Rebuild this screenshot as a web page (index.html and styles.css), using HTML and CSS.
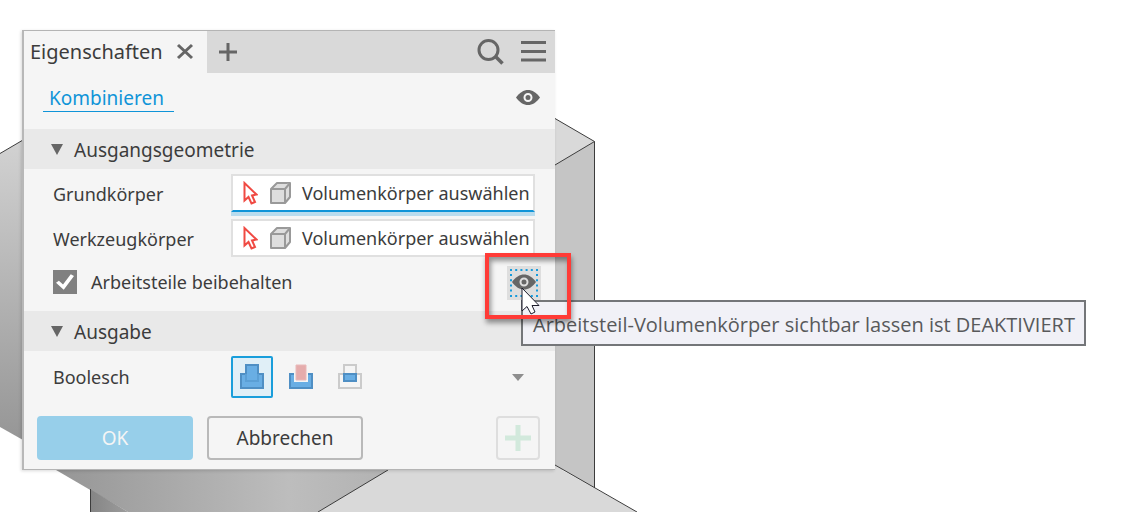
FILE: index.html
```html
<!DOCTYPE html>
<html lang="de">
<head>
<meta charset="utf-8">
<title>Eigenschaften</title>
<link rel="stylesheet" href="styles.css">
</head>
<body>
<svg class="model" width="700" height="512" viewBox="0 0 700 512" aria-hidden="true">
  <defs>
    <linearGradient id="side" x1="0" y1="0" x2="0" y2="1"><stop offset="0" stop-color="#d2d2d2"/><stop offset="1" stop-color="#969696"/></linearGradient>
    <linearGradient id="base" x1="0" y1="0" x2="1" y2="0"><stop offset="0" stop-color="#969696"/><stop offset="0.7" stop-color="#bdbdbd"/><stop offset="1" stop-color="#b2b2b2"/></linearGradient>
    <linearGradient id="foot" x1="0" y1="0" x2="1" y2="0"><stop offset="0" stop-color="#858585"/><stop offset="1" stop-color="#9c9c9c"/></linearGradient>
  </defs>
  <path d="M0 153.500L23 140V440L0 427z" fill="url(#side)"/>
  <path d="M0 153.500L23 140" class="edge"/>
  <path d="M56 470H389L318 512H128z" fill="url(#base)"/>
  <path d="M90 489L128 512H90z" fill="url(#foot)"/>
  <path d="M90.500 489V512" class="edge"/>
  <path d="M388 470H562L637 512H318z" fill="#d9d9d9"/>
  <path d="M318 512L388 470" class="edge"/>
  <path d="M555 118.500L594.500 141.500L555 165z" fill="#d9d9d9"/>
  <path d="M555 165L594.500 141.500V488L555 465z" fill="#c5c5c5"/>
  <path d="M555 465L564 470H555z" fill="#d9d9d9"/>
  <path d="M555 118.500L594.500 141.500L555 165M594.500 141.500V488M555 465L637 512" class="edge"/>
</svg>

<main class="panel">
  <header class="tabs">
    <div class="tab">
      <span>Eigenschaften</span>
      <button class="icon-button" aria-label="Schließen"><svg width="18" height="18" viewBox="0 0 18 18"><path d="M2 2L16 15M16 2L2 15" stroke="#666" stroke-width="3"/></svg></button>
    </div>
    <button class="icon-button add-tab" aria-label="Hinzufügen"><svg width="18" height="18" viewBox="0 0 18 18"><path d="M9 0V18M0 9H18" stroke="#666" stroke-width="3"/></svg></button>
    <button class="icon-button" aria-label="Suchen"><svg width="28" height="28" viewBox="0 0 28 28" fill="none" stroke="#666"><circle cx="11.500" cy="12" r="9.500" stroke-width="3"/><path d="M18.500 18.500L25.500 25.500" stroke-width="3.500"/></svg></button>
    <button class="icon-button menu" aria-label="Menü"><svg width="25" height="22" viewBox="0 0 25 22"><path d="M0 1.500H25M0 10.500H25M0 19H25" stroke="#666" stroke-width="3"/></svg></button>
  </header>

  <nav class="crumbs">
    <a class="crumb" href="#">Kombinieren</a>
    <button class="icon-button" aria-label="Sichtbarkeit"><svg width="24" height="15" viewBox="0 0 24 15"><path d="M0 7.500C7-2.500 17-2.500 24 7.500C17 17.500 7 17.500 0 7.500z" fill="#666"/><circle cx="12" cy="7.500" r="3.500" fill="#666" stroke="#f5f5f5" stroke-width="2"/></svg></button>
  </nav>

  <h2 class="section-title"><svg width="12" height="11" viewBox="0 0 12 11"><path d="M0 0H12L6 11z" fill="#666"/></svg>Ausgangsgeometrie</h2>
  <div class="fields">
    <span class="label" id="grund">Grundkörper</span>
    <button class="picker picker-active" aria-describedby="grund">
      <svg width="16" height="24" viewBox="0 0 16 24"><path d="M2.500 2V19.500L6.500 16L9.500 22.500L13 21L10 14.500L14.500 13.500z" fill="#fff" stroke="#f04a43" stroke-width="2"/></svg>
      <svg width="22" height="22" viewBox="0 0 22 22" fill="#dedede" stroke="#999" stroke-width="2" stroke-linejoin="round"><path d="M2 7L8 1H21V15L16 21H2z"/><path d="M2 7H16L21 1M16 7V21"/></svg>
      <span>Volumenkörper auswählen</span>
    </button>
    <span class="label" id="werkzeug">Werkzeugkörper</span>
    <button class="picker" aria-describedby="werkzeug">
      <svg width="16" height="24" viewBox="0 0 16 24"><path d="M2.500 2V19.500L6.500 16L9.500 22.500L13 21L10 14.500L14.500 13.500z" fill="#fff" stroke="#f04a43" stroke-width="2"/></svg>
      <svg width="22" height="22" viewBox="0 0 22 22" fill="#dedede" stroke="#999" stroke-width="2" stroke-linejoin="round"><path d="M2 7L8 1H21V15L16 21H2z"/><path d="M2 7H16L21 1M16 7V21"/></svg>
      <span>Volumenkörper auswählen</span>
    </button>
  </div>
  <div class="keep-row">
    <input class="check" type="checkbox" id="keep" checked>
    <label class="label" for="keep">Arbeitsteile beibehalten</label>
    <div class="visibility">
      <button class="icon-button eye-toggle" aria-label="Arbeitsteil-Volumenkörper sichtbar lassen"><svg width="34" height="34" viewBox="0 0 34 34"><path d="M3 4H31M3 30H31" fill="none" stroke="#169bdc" stroke-width="2" stroke-dasharray="2 3.200"/><path d="M4 8V28M30 8V28" fill="none" stroke="#169bdc" stroke-width="2" stroke-dasharray="2 3.200"/><path d="M5 16C12 6 22 6 29 16C22 26 12 26 5 16z" fill="#666"/><circle cx="17" cy="16" r="3.500" fill="#666" stroke="#dedede" stroke-width="2"/></svg></button>
      <div class="tooltip" role="tooltip">Arbeitsteil-Volumenkörper sichtbar lassen ist DEAKTIVIERT</div>
      <div class="highlight"></div>
      <svg class="pointer" width="20" height="28" viewBox="0 0 20 28"><path d="M1 1V24L6 19.500L10 27L14 25L11 18.500H18z" fill="#fff" stroke="#1c1c2c" stroke-width="1"/></svg>
    </div>
  </div>

  <h2 class="section-title"><svg width="12" height="11" viewBox="0 0 12 11"><path d="M0 0H12L6 11z" fill="#666"/></svg>Ausgabe</h2>
  <div class="output" role="radiogroup" aria-labelledby="bool">
    <span class="label" id="bool">Boolesch</span>
    <div class="modes">
      <label class="mode"><input type="radio" name="mode" aria-label="Verbinden" checked><svg width="26" height="26" viewBox="0 0 26 26"><path d="M7 1H19V10H24V24H2V10H7z" fill="#69aee4" stroke="#4f8fc4" stroke-width="2"/><path d="M7 10V17H19V10" fill="none" stroke="#5b9fd5" stroke-width="2"/></svg></label>
      <label class="mode"><input type="radio" name="mode" aria-label="Ausschneiden"><svg width="26" height="26" viewBox="0 0 26 26"><path d="M2 10H24V24H2z" fill="#69aee4" stroke="#4f8fc4" stroke-width="2"/><path d="M6 0H20V18H6z" fill="#f5f5f5"/><path d="M8 1H18V16H8z" fill="#e5acac" stroke="#e9b9b9"/></svg></label>
      <label class="mode"><input type="radio" name="mode" aria-label="Schnittmenge"><svg width="26" height="26" viewBox="0 0 26 26"><path d="M2 10H24V24H2zM7 1H19V10H7z" fill="#f5f5f5" stroke="#cbcbcb" stroke-width="2"/><path d="M7 10H19V17H7z" fill="#69aee4" stroke="#4f8fc4" stroke-width="2"/></svg></label>
    </div>
    <button class="icon-button more" aria-label="Weitere Optionen"><svg width="12" height="7" viewBox="0 0 12 7"><path d="M0 0H12L6 7z" fill="#8e8e8e"/></svg></button>
  </div>

  <footer class="actions">
    <button class="action ok">OK</button>
    <button class="action">Abbrechen</button>
    <button class="action apply" aria-label="Anwenden"><svg width="26" height="26" viewBox="0 0 26 26"><path d="M13 0V26M0 13H26" stroke="#d2e9dc" stroke-width="5"/></svg></button>
  </footer>
</main>
</body>
</html>
```
FILE: styles.css
```css
* { box-sizing: border-box; }

body {
  margin: 0;
  padding: 30px 22px 42px;
  background: #fff;
  color: #3c3c3c;
  font-family: "Noto Sans", "Open Sans", sans-serif;
  font-size: 18px;
  line-height: 24px;
}

button { font: inherit; color: inherit; }
svg { display: block; flex: none; }

.model { position: absolute; left: 0; top: 0; }
.edge { fill: none; stroke: #3c3c3c; stroke-width: 1; }

.panel {
  position: relative;
  width: 100%;
  max-width: 533px;
  background: #f5f5f5;
  border-left: 2px solid #b8b8b8;
  border-top: 1px solid #b4b4b4;
  border-bottom: 1px solid #b4b4b4;
  box-shadow: -1px 1px 3px rgba(0, 0, 0, 0.15);
}

.icon-button { display: flex; padding: 0; border: 0; background: none; }

.tabs {
  display: flex;
  align-items: center;
  height: 42px;
  padding-right: 9px;
  background: #d9d9d9;
  font-size: 20px;
}
.tab {
  display: flex;
  align-items: center;
  justify-content: space-between;
  width: 183px;
  height: 42px;
  padding: 0 13px 0 6px;
  background: #f5f5f5;
}
.add-tab { margin: 0 auto 0 12px; }
.menu { margin-left: 16px; }

.crumbs {
  display: flex;
  align-items: center;
  justify-content: space-between;
  height: 56px;
  padding: 0 15px 8px 19px;
}
.crumb {
  padding: 3px 10px 0 6px;
  border-bottom: 1px solid #0f94d8;
  color: #0f94d8;
  font-size: 19px;
  line-height: 26px;
  text-decoration: none;
}

.section-title {
  display: flex;
  align-items: center;
  gap: 11px;
  height: 40px;
  margin: 0;
  padding: 1px 27px 0;
  background: #e9e9e9;
  font-size: 19px;
  font-weight: 400;
}

.fields {
  display: grid;
  grid-template-columns: 178px minmax(0, 1fr);
  align-items: start;
  row-gap: 3px;
  padding: 5px 20px 0 29px;
}
.fields .label { padding-top: 8px; }
.picker {
  display: flex;
  align-items: center;
  gap: 11px;
  height: 38px;
  padding: 0 3px 0 9px;
  border: 2px solid #e0e0e0;
  background: #fff;
  white-space: nowrap;
}
.picker-active {
  margin-bottom: 4px;
  border-bottom-color: #0f94d8;
  box-shadow: 0 4px #b9dcee;
}

.keep-row {
  display: flex;
  align-items: center;
  gap: 14px;
  height: 54px;
  padding: 0 14px 4px 29px;
}
.check {
  display: grid;
  place-items: center;
  appearance: none;
  width: 24px;
  height: 24px;
  margin: 0;
  background: #808080;
}
.check::before {
  content: "";
  width: 18px;
  height: 16px;
  background: #fff;
  clip-path: polygon(0 55%, 16% 42%, 39% 66%, 82% 2%, 100% 12%, 43% 98%);
}
.visibility { position: relative; margin: 2px 0 0 auto; }
.eye-toggle { background: #dedede; }
.tooltip {
  position: absolute;
  left: 14px;
  top: 34px;
  z-index: 1;
  padding: 11px 9px 7px 10px;
  border: 2px solid #747679;
  background: #f1f1f7;
  color: #58595b;
  font-family: "Open Sans", "Noto Sans", sans-serif;
  font-size: 20px;
  white-space: nowrap;
}
.highlight {
  position: absolute;
  left: -22px;
  top: -13px;
  z-index: 2;
  width: 86px;
  height: 66px;
  border: 4px solid #ff3b37;
  box-shadow: 1px 4px 5px rgba(0, 0, 0, 0.4), inset 2px 4px 5px rgba(0, 0, 0, 0.4);
}
.pointer { position: absolute; left: 14px; top: 21px; z-index: 3; }

.output {
  display: flex;
  align-items: center;
  height: 54px;
  padding: 0 31px 2px 29px;
}
.output .label { width: 178px; }
.modes { display: flex; gap: 7px; }
.mode {
  display: grid;
  place-items: center;
  width: 42px;
  height: 42px;
  border: 2px solid transparent;
  border-radius: 2px;
}
.mode:has(:checked) { border-color: #1a9edb; background: #e0eff7; }
.mode input { position: absolute; appearance: none; margin: 0; }
.more { margin-left: auto; }

.actions {
  display: flex;
  gap: 14px;
  padding: 11px 15px 9px 13px;
  font-size: 19px;
}
.action {
  width: 156px;
  height: 44px;
  padding: 0;
  border: 2px solid #b9b9b9;
  border-radius: 4px;
  background: #f5f5f5;
}
.ok { border-color: #97cfea; background: #97cfea; color: #f5f5f5; }
.apply {
  display: grid;
  place-items: center;
  width: 44px;
  margin-left: auto;
  border-color: #dedede;
}
```
